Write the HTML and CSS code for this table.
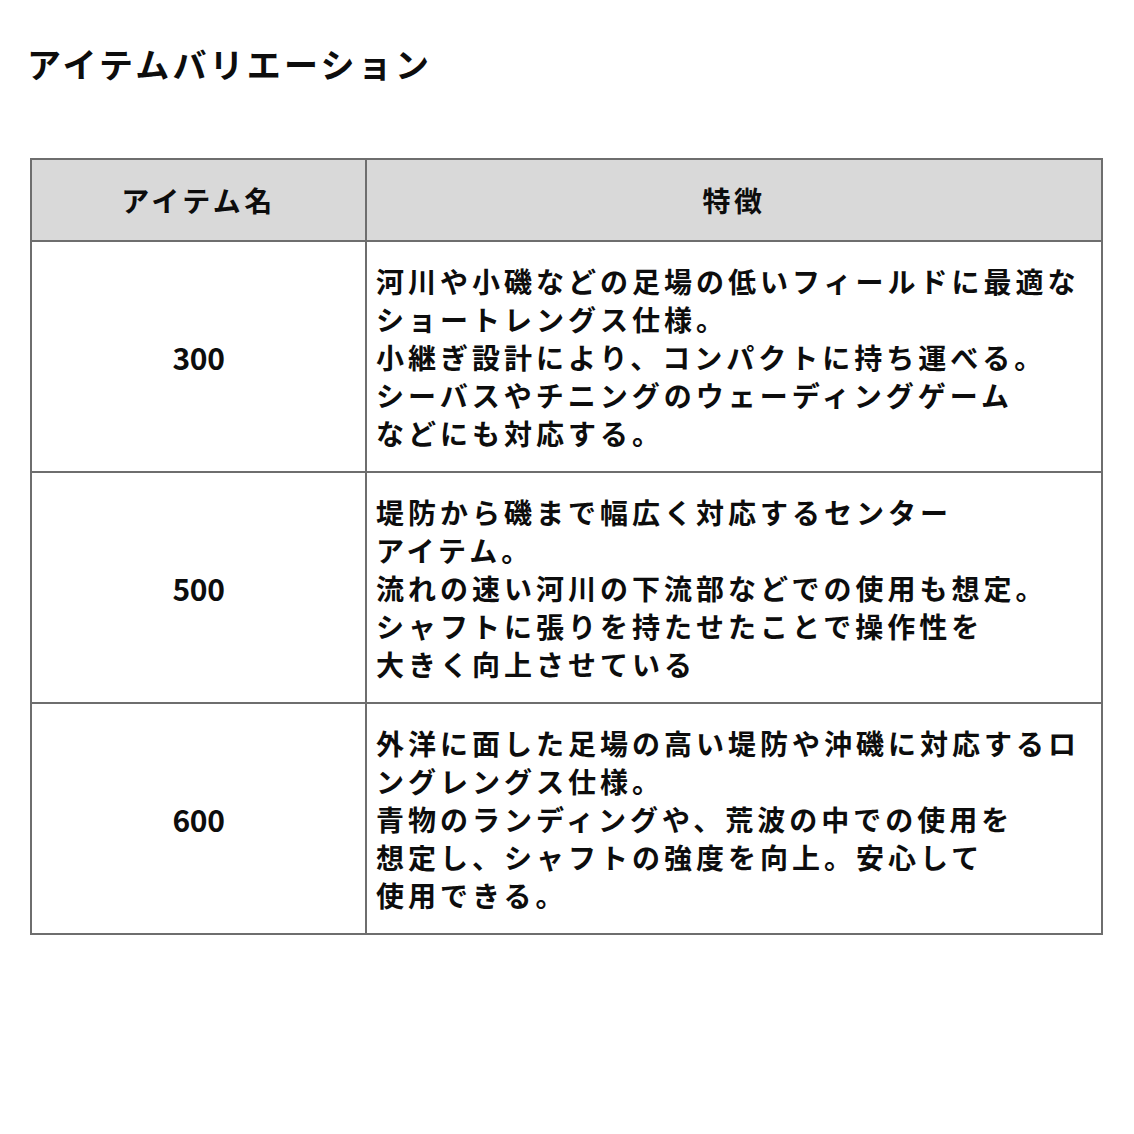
FILE: index.html
```html
<!DOCTYPE html>
<html lang="ja">
<head>
<meta charset="utf-8">
<link rel="stylesheet" href="styles.css">
</head>
<body>
<h1 class="title">アイテムバリエーション</h1>
<table class="variations">
  <thead>
    <tr>
      <th class="col-name">アイテム名</th>
      <th class="col-feature">特徴</th>
    </tr>
  </thead>
  <tbody>
    <tr>
      <td class="name">300</td>
      <td class="feature">河川や小磯などの足場の低いフィールドに最適な<br>ショートレングス仕様。<br>小継ぎ設計により、コンパクトに持ち運べる。<br>シーバスやチニングのウェーディングゲーム<br>などにも対応する。</td>
    </tr>
    <tr>
      <td class="name">500</td>
      <td class="feature">堤防から磯まで幅広く対応するセンター<br>アイテム。<br>流れの速い河川の下流部などでの使用も想定。<br>シャフトに張りを持たせたことで操作性を<br>大きく向上させている</td>
    </tr>
    <tr>
      <td class="name">600</td>
      <td class="feature">外洋に面した足場の高い堤防や沖磯に対応するロ<br>ングレングス仕様。<br>青物のランディングや、荒波の中での使用を<br>想定し、シャフトの強度を向上。安心して<br>使用できる。</td>
    </tr>
  </tbody>
</table>
</body>
</html>
```
FILE: styles.css
```css
html, body {
  margin: 0;
  padding: 0;
  background: #ffffff;
}
body {
  font-family: "Noto Sans CJK JP", "Noto Sans", sans-serif;
  color: #0d0d0d;
  padding: 40px 0 0 30px;
}
.title {
  margin: 0 0 0 -3px;
  font-size: 34px;
  font-weight: 700;
  letter-spacing: 3.2px;
  line-height: 48px;
}
.variations {
  margin-top: 70px;
  width: 1073px;
  border-collapse: collapse;
  table-layout: fixed;
}
.variations th,
.variations td {
  border: 2px solid #6e6e6e;
  font-weight: 700;
}
.variations th {
  background: #d9d9d9;
  height: 80px;
  font-size: 28px;
  letter-spacing: 3.5px;
  text-align: center;
  padding: 0;
}
.col-name {
  width: 333px;
}
.name {
  text-align: center;
  font-size: 30px;
  letter-spacing: -0.3px;
  height: 227px;
}
.feature {
  font-size: 28px;
  letter-spacing: 4px;
  line-height: 38px;
  padding: 0 0 0 9px;
  white-space: nowrap;
  vertical-align: middle;
}
```
